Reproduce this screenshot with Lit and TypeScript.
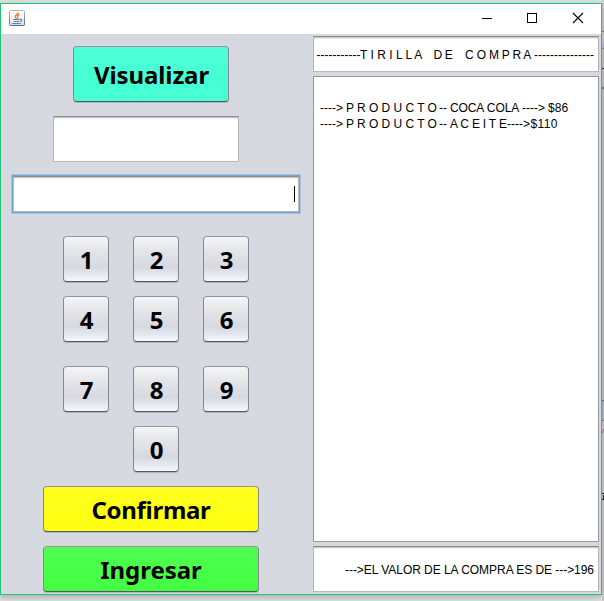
import { LitElement, html, css, svg } from "lit";
import { customElement } from "lit/decorators.js";
import { styleMap } from "lit/directives/style-map.js";

type Run = [text: string, width: number, spacing?: number];

const heading: Run[] = [
  ["-----------", 43.5],
  ["T I R I L L A", 73.5],
  ["D E", 31.5, -0.4],
  ["C O M P R A", 69, -0.22],
  ["---------------", 60],
];
const products: Run[][] = [
  [["---->", 26], ["P R O D U C T O", 93, -0.03], ["--", 11], ["COCA COLA", 72, -0.1], ["---->", 26], ["$86", 22, 0.1]],
  [["---->", 26], ["P R O D U C T O", 93, -0.03], ["--", 11], ["A C E I T E", 57, -0.2], ["---->", 23.5], ["$110", 28, 0.35]],
];
const keyRows = [["1", "2", "3"], ["4", "5", "6"], ["7", "8", "9"], ["0"]];

@customElement("app-root")
export class AppRoot extends LitElement {
  static styles = css`
    * { box-sizing: border-box; }
    :host {
      display: block; width: 604px; height: 601px; padding-top: 3px; overflow: hidden; position: relative;
      background: #e2e2e2; color: #000; font-family: "Liberation Sans", Arial, sans-serif; font-size: 12px;
    }
    .behind { position: absolute; right: 0; top: 0; width: 2px; height: 601px; }
    .window {
      position: relative; width: 602px; height: 592px; border: 1px solid #1fc677; background: #d6d9df;
      box-shadow: 0 2px 7px rgba(0, 0, 0, .27);
    }
    .title { height: 30px; background: #fff; display: flex; align-items: flex-start; padding-left: 8px; }
    .java { margin-top: 6px; }
    .controls { margin-left: auto; margin-right: 17px; margin-top: 8px; display: flex; gap: 33px; }
    .controls svg { display: block; }
    .controls svg:last-child { margin-left: 1px; }
    .body { display: flex; height: 560px; }
    .left { width: 312px; display: flex; flex-direction: column; padding-top: 12px; }
    .btn {
      border: 1px solid #85888f; border-top-color: #94979c; border-bottom-color: #55585e; border-radius: 4px;
      box-shadow: 0 1px 0 rgba(120, 124, 132, .4);
      display: flex; align-items: center; justify-content: center;
      font: bold 24px/30px "Noto Sans", sans-serif; padding-top: 2px;
    }
    .view { width: 156px; height: 56px; margin-left: 72px; padding-left: 1px; letter-spacing: -.1px; background: linear-gradient(#50ffd8, #45ffd2 60%, #48ffd5); }
    .field {
      background: #fff; border: 1px solid #b8b8b8; border-top-color: #8b8b8b;
      box-shadow: inset 0 1px 0 #c9c9c9, inset 0 2px 0 #efefef;
    }
    .small { width: 186px; height: 46px; margin: 14px 0 0 52px; }
    .entry {
      width: 286px; height: 36px; margin: 14px 0 0 12px; display: flex; justify-content: flex-end; padding: 9px 3px 0 0;
      box-shadow: inset 0 1px 0 #c9c9c9, inset 0 2px 0 #efefef, 0 0 0 1px #73a4d1, 0 0 0 2px #a9c3de;
    }
    .caret { width: 1px; height: 16px; background: #000; }
    .keys { width: 186px; margin: 24px 0 0 62px; }
    .keyrow { display: flex; justify-content: center; gap: 24px; margin-bottom: 14px; }
    .keyrow:nth-child(2) { margin-bottom: 24px; }
    .keyrow:last-child { margin-bottom: 0; }
    .key {
      width: 46px; height: 46px; padding-left: 1px;
      background: linear-gradient(#f4f5f6, #e3e4e8 35%, #d6d9df 68%, #e4e8f0 86%, #f6f9ff);
    }
    .wide { width: 216px; height: 46px; margin-left: 42px; }
    .ok { margin-top: 14px; letter-spacing: -.3px; background: linear-gradient(#ffff20, #ffff12); }
    .in { margin-top: 14px; letter-spacing: -.05px; background: linear-gradient(#50ff50, #42ff42); }
    .right { width: 286px; padding-top: 2px; display: flex; flex-direction: column; }
    .line { white-space: pre; display: flex; align-items: center; }
    .run { flex: none; white-space: pre; }
    .head { height: 36px; padding-left: 2.6px; padding-top: 1px; }
    .area { height: 466px; margin: 4px 0; background: #fff; border: 1px solid #9297a1; padding: 23px 6px; line-height: 16px; }
    .total { height: 46px; justify-content: flex-end; padding-right: 4px; padding-top: 1px; letter-spacing: -.045px; }
  `;

  private runs(list: Run[]) {
    return list.map(([text, width, spacing = 0]) => html`<span class="run"
      style=${styleMap({ width: `${width}px`, letterSpacing: `${spacing}px` })}>${text}</span>`);
  }

  render() {
    return html`
      <svg class="behind" width="2" height="601" viewBox="0 0 2 601">
        ${svg`<path d="M0 0h2v4H0z" fill="#d0d0d0"/>
        <path d="M0 4h2v27H0z" fill="#cfcfd0"/>
        <path d="M0 31h2v1H0z" fill="#77797d"/>
        <path d="M0 32h2v12H0z" fill="#d0d0d1"/>
        <path d="M0 44h2v4H0z" fill="#bfc4dc"/>
        <path d="M0 48h2v1H0z" fill="#83868e"/>
        <path d="M0 49h2v38H0z" fill="#cacaca"/>
        <path d="M0 68h2v1H0z" fill="#16222c"/>
        <path d="M0 87h2v2H0z" fill="#777"/>
        <path d="M0 89h2v311H0z" fill="#c9c9c9"/>
        <path d="M0 400h2v1H0z" fill="#397ba6"/>
        <path d="M0 401h2v19H0z" fill="#adbdc8"/>
        <path d="M0 420h2v1H0z" fill="#777"/>
        <path d="M0 421h2v180H0z" fill="#d0d0d0"/>
        <path d="M1 429h1v2h-1v2h-1v-2h1z" fill="#a68378"/>
        <path d="M0 493h2v1H0zM1 495h1v4h1v1H0v-1h1z" fill="#222"/>`}
      </svg>
      <div class="window">
        <div class="title">
          <svg class="java" width="16" height="16" viewBox="0 0 16 16">
            <defs>
              <linearGradient id="face" x2="0" y2="1">
                <stop stop-color="#fff" /><stop offset=".5" stop-color="#f3f5f7" /><stop offset="1" stop-color="#cfdae4" />
              </linearGradient>
              <linearGradient id="edge" x2="0" y2="1">
                <stop stop-color="#b3b7bb" /><stop offset="1" stop-color="#4f6f8b" />
              </linearGradient>
            </defs>
            <rect x=".5" y=".5" width="15" height="15" rx="1" fill="url(#face)" stroke="url(#edge)" />
            <path d="M9.2 2.4c.5 1.7-3.4 2.5-3 4.4.1.9.9 1.4 1.4 2M10.6 4.4c-1.7.6-2.6 1.6-2 2.4.5.7.3 1.2-.3 1.8" fill="none" stroke="#e8852d" stroke-width="1.4" />
            <path d="M4 9.5h7M5 11.5h5.2M3 13.5h8.7M11.2 9.2c2.2-.5 2.2 1.6-.2 2.3" fill="none" stroke="#6684a2" stroke-width="1.1" />
          </svg>
          <div class="controls">
            <svg width="12" height="12" viewBox="0 0 12 12"><path d="M1 6.5h10" stroke="#000" shape-rendering="crispEdges" /></svg>
            <svg width="12" height="12" viewBox="0 0 12 12"><path d="M1.5 1.5h9v9h-9z" fill="none" stroke="#000" shape-rendering="crispEdges" /></svg>
            <svg width="12" height="12" viewBox="0 0 12 12"><path d="M1 1l10 10M11 1l-10 10" fill="none" stroke="#000" stroke-width="1.1" /></svg>
          </div>
        </div>
        <div class="body">
          <div class="left">
            <div class="btn view">Visualizar</div>
            <div class="field small"></div>
            <div class="field entry"><span class="caret"></span></div>
            <div class="keys">
              ${keyRows.map(row => html`<div class="keyrow">${row.map(k => html`<div class="btn key">${k}</div>`)}</div>`)}
            </div>
            <div class="btn wide ok">Confirmar</div>
            <div class="btn wide in">Ingresar</div>
          </div>
          <div class="right">
            <div class="field line head">${this.runs(heading)}</div>
            <div class="area">${products.map(p => html`<div class="line">${this.runs(p)}</div>`)}</div>
            <div class="field line total">---&gt;EL VALOR DE LA COMPRA ES DE ---&gt;196</div>
          </div>
        </div>
      </div>`;
  }
}
